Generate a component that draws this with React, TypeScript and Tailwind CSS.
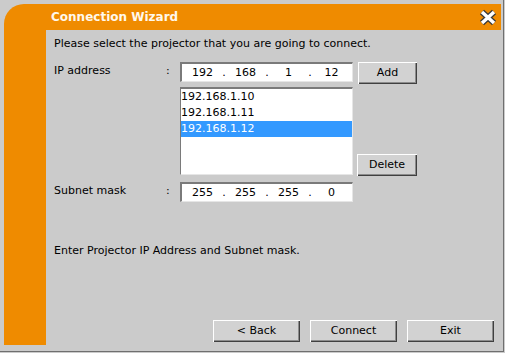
import React from 'react'

const font = { fontFamily: '"DejaVu Sans", Verdana, sans-serif' }

function IpBox({ parts }: { parts: string[] }) {
  return (
    <div className="w-[173px] h-[20px] bg-white border-t-2 border-l-2 border-t-[#7a7a7a] border-l-[#7a7a7a] border-b border-r border-b-[#e6e6e6] border-r-[#e6e6e6] flex items-center pl-[3px] text-[11px] text-black">
      {parts.map((p, i) => (
        <React.Fragment key={i}>
          {i > 0 && <span className="w-[8px] text-center">.</span>}
          <span className="w-[35px] text-center">{p}</span>
        </React.Fragment>
      ))}
    </div>
  )
}

function Btn({ label, w }: { label: string; w: string }) {
  return (
    <button
      className={`${w} h-[22px] bg-[#d2d2d2] text-[11px] text-black shadow-[inset_1px_1px_0_#ffffff,inset_-1px_-1px_0_#404040,inset_-2px_-2px_0_#8c8c8c] flex items-center justify-center`}
    >
      {label}
    </button>
  )
}

export default function App() {

  const items = ['192.168.1.10', '192.168.1.11', '192.168.1.12']

  return (
    <div className="w-[505px] h-[353px] bg-[#cbcbcb] overflow-hidden" style={font}>

      <div className="w-[504px] h-[352px] border-r border-b border-[#6f6f6f] flex flex-col pt-[4px] pl-[4px]">

        {/* header */}
        <div className="w-[497px] h-[26px] shrink-0 bg-[#ef8b00] rounded-tl-[20px] flex items-center justify-between pl-[47px] pr-[4px]">

          <span className="text-[12px] font-bold text-[#fff8ec]">Connection Wizard</span>

          <svg width="18" height="17" viewBox="0 0 18 17">
            <path d="M3 3 L15 14 M15 3 L3 14" stroke="#3a3a3a" strokeWidth="6" />
            <path d="M3 3 L15 14 M15 3 L3 14" stroke="#ffffff" strokeWidth="3.4" />
          </svg>

        </div>

        <div className="flex flex-1">

          <div className="w-[42px] h-[315px] bg-[#ef8b00]" />

          <div className="flex-1 flex flex-col pl-[8px] pr-[9px] text-[11px] text-black leading-[16px]">

            <p className="mt-[6px]">Please select the projector that you are going to connect.</p>

            {/* ip row */}
            <div className="flex items-start mt-[10px]">
              <span className="w-[112px] pt-[1px]">IP address</span>
              <span className="w-[14px] pt-[1px]">:</span>
              <IpBox parts={['192', '168', '1', '12']} />
              <div className="ml-[5px]">
                <Btn label="Add" w="w-[59px]" />
              </div>
            </div>

            {/* list */}
            <div className="flex items-end mt-[3px]">
              <div className="w-[126px]" />
              <div className="w-[173px] h-[88px] bg-white border-t-2 border-l border-t-[#7a7a7a] border-l-[#7a7a7a] border-b border-r border-b-[#e6e6e6] border-r-[#e6e6e6] flex flex-col">
                {items.map((ip, i) => (
                  <div
                    key={ip}
                    className={i === 2 ? 'h-[16px] bg-[#3399ff] text-white' : 'h-[16px]'}
                  >
                    {ip}
                  </div>
                ))}
              </div>
              <div className="ml-[4px] mb-[-1px]">
                <Btn label="Delete" w="w-[60px]" />
              </div>
            </div>

            {/* subnet */}
            <div className="flex items-start mt-[7px]">
              <span className="w-[112px] pt-[1px]">Subnet mask</span>
              <span className="w-[14px] pt-[1px]">:</span>
              <IpBox parts={['255', '255', '255', '0']} />
            </div>

            <p className="mt-[41px]">Enter Projector IP Address and Subnet mask.</p>

            <div className="flex justify-end gap-[10px] mt-[61px]">
              <Btn label="< Back" w="w-[87px]" />
              <Btn label="Connect" w="w-[87px]" />
              <Btn label="Exit" w="w-[87px]" />
            </div>

          </div>

        </div>

      </div>

    </div>
  )
}
